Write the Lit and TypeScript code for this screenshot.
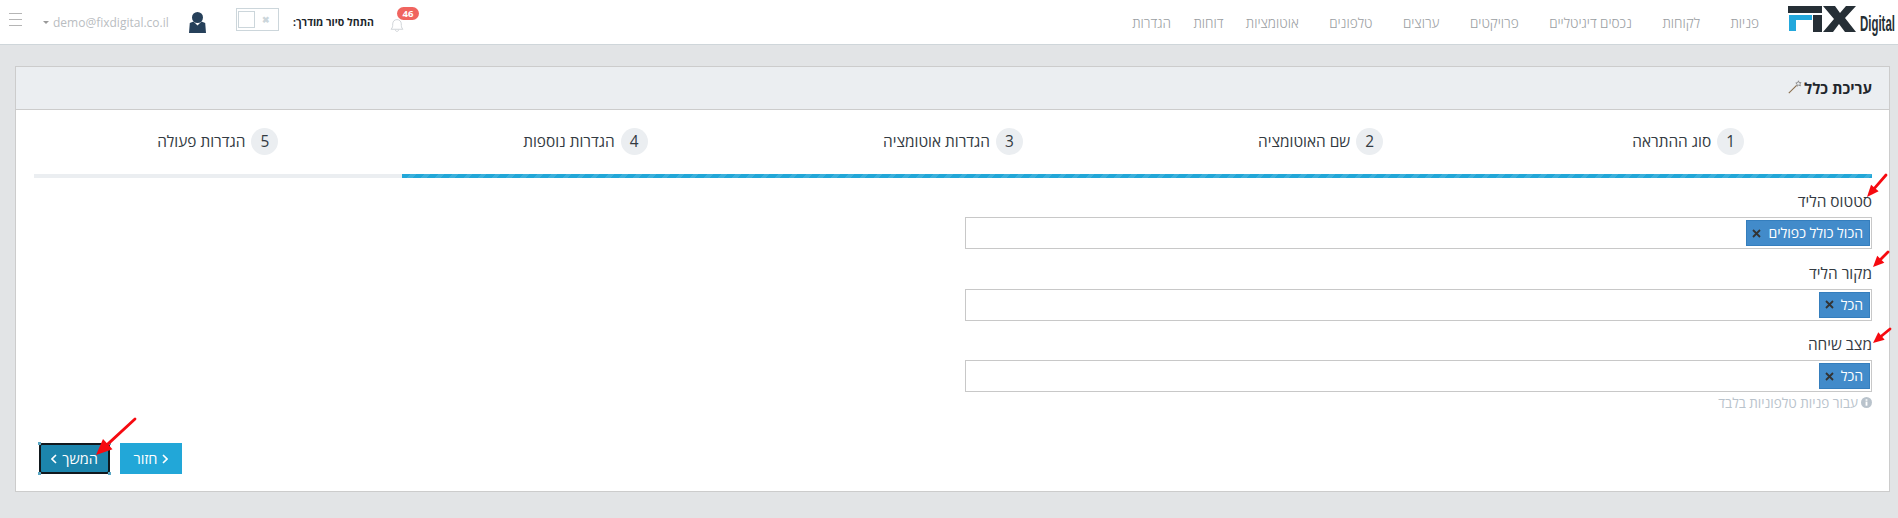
import { LitElement, html, css, svg } from "lit";
import { customElement } from "lit/decorators.js";

const NAV = ["פניות", "לקוחות", "נכסים דיגיטליים", "פרויקטים", "ערוצים", "טלפונים", "אוטומציות", "דוחות", "הגדרות"];
const STEPS = [
  ["1", "סוג ההתראה"],
  ["2", "שם האוטומציה"],
  ["3", "הגדרות אוטומציה"],
  ["4", "הגדרות נוספות"],
  ["5", "הגדרות פעולה"],
];
const FIELDS = [
  ["סטטוס הליד", "הכול כולל כפולים"],
  ["מקור הליד", "הכל"],
  ["מצב שיחה", "הכל"],
];
const ARROWS = [
  [1886, 175, 1867, 197, 12, 5],
  [1888, 252, 1873, 267, 11, 5],
  [1890, 329, 1873, 343, 11, 5],
  [135, 419, 96, 455, 16, 7],
];

@customElement("app-root")
export class AppRoot extends LitElement {
  static styles = css`
    :host {
      display: block;
      position: relative;
      width: 1898px;
      height: 518px;
      overflow: hidden;
      background: #e2e4e6;
      font-family: "Open Sans", "Noto Sans", "Liberation Sans", sans-serif;
      color: #333a42;
    }
    .top {
      height: 44px;
      box-sizing: content-box;
      background: #fff;
      border-bottom: 1px solid #cfd6da;
      display: flex;
      align-items: center;
      justify-content: space-between;
      direction: ltr;
    }
    .left {
      display: flex;
      align-items: center;
      height: 44px;
      padding-left: 9px;
    }
    .burger {
      width: 13px;
      display: flex;
      flex-direction: column;
      gap: 5px;
      margin-right: 21px;
      margin-top: -6px;
    }
    .burger i {
      display: block;
      height: 1px;
      background: #b5b5b5;
    }
    .caret {
      width: 0;
      height: 0;
      border: 3px solid transparent;
      border-top: 3px solid #999;
      border-bottom: 0;
      margin-right: 4px;
    }
    .email {
      font-size: 12px;
      color: #b9bdc1;
      width: 136px;
    }
    .avatar {
      width: 17px;
      height: 21px;
      margin-right: 30px;
    }
    .toggle {
      width: 39px;
      height: 19px;
      border: 1px solid #ccd6db;
      display: flex;
      align-items: center;
      padding: 1px;
      margin-right: 14px;
      box-sizing: content-box;
      margin-top: -5px;
    }
    .toggle .knob {
      width: 17px;
      height: 17px;
      border: 1px solid #ccd6db;
      box-sizing: border-box;
      flex: none;
    }
    .toggle .x {
      flex: 1;
      text-align: center;
      font-size: 9px;
      font-weight: 700;
      color: #ccd6db;
      line-height: 17px;
    }
    .tour {
      font-size: 10.5px;
      font-weight: 700;
      color: #20262c;
      width: 97px;
      direction: rtl;
      text-align: left;
    }
    .bellwrap {
      position: relative;
      width: 14px;
      height: 15px;
      margin-top: 7px;
    }
    .bellwrap svg {
      display: block;
    }
    .badge {
      position: absolute;
      left: 7px;
      top: -11px;
      width: 22px;
      height: 13px;
      border-radius: 7px;
      background: #f0645f;
      color: #fff;
      font-size: 9.5px;
      font-weight: 700;
      line-height: 13px;
      text-align: center;
    }
    .right {
      display: flex;
      direction: rtl;
      align-items: center;
      height: 44px;
    }
    .logo {
      display: flex;
      direction: ltr;
      align-items: flex-start;
      margin-left: 0;
      height: 44px;
      padding-top: 6px;
      box-sizing: border-box;
      width: 110px;
    }
    .logo svg {
      display: block;
      width: 69px;
      height: 26px;
      flex: none;
    }
    .logo span {
      font-family: "Liberation Sans", sans-serif;
      font-weight: 700;
      font-size: 22px;
      line-height: 22px;
      color: #262f36;
      transform: scaleX(0.52);
      transform-origin: left top;
      margin-left: 3px;
      margin-top: 7px;
      flex: none;
    }
    nav {
      display: flex;
      font-size: 13.6px;
      font-weight: 300;
      color: #9a9ea2;
    }
    nav span {
      margin-left: 30.5px;
    }
    nav span:nth-child(n + 7) {
      margin-left: 22.5px;
    }
    nav span:first-child {
      margin-right: 29px;
    }
    .card {
      margin: 21px 8px 0 15px;
      height: 424px;
      background: #fff;
      border: 1px solid #ccc;
      direction: rtl;
      display: flex;
      flex-direction: column;
    }
    .head {
      height: 42px;
      flex: none;
      background: #ebeef1;
      border-bottom: 1px solid #ccc;
      display: flex;
      align-items: center;
      gap: 2px;
      padding: 0 17px;
      font-size: 15px;
      font-weight: 700;
      color: #1f262c;
    }
    .head svg {
      width: 14px;
      height: 14px;
      margin-top: -3px;
    }
    .body {
      padding: 0 17px 0 18px;
      flex: 1;
      display: flex;
      flex-direction: column;
    }
    .steps {
      display: flex;
      height: 64px;
    }
    .step {
      flex: 1;
      display: flex;
      align-items: flex-start;
      justify-content: center;
      gap: 6px;
      padding-top: 18px;
      font-size: 15.4px;
      color: #333a42;
      line-height: 27px;
    }
    .num {
      width: 27px;
      height: 27px;
      border-radius: 50%;
      background: #ebeef1;
      text-align: center;
      flex: none;
    }
    .bar {
      height: 4px;
      flex: none;
      background: #ebeef1;
      display: flex;
    }
    .bar .fill {
      width: 80%;
      background: repeating-linear-gradient(135deg, #22a7d8 0 6px, #3bb0dc 6px 10px);
    }
    .form {
      width: 907px;
      margin-top: 14px;
      display: flex;
      flex-direction: column;
    }
    .label {
      font-size: 15.4px;
      line-height: 19px;
      margin-bottom: 6px;
      color: #333a42;
    }
    .select {
      height: 32px;
      box-sizing: border-box;
      border: 1px solid #c8c8c8;
      padding: 2px 1px 2px 2px;
      display: flex;
      margin-bottom: 14.5px;
    }
    .tag {
      background: #428bca;
      border: 1px solid #357ebd;
      color: #fff;
      font-size: 14px;
      line-height: 24px;
      padding: 0 6px 0 5px;
      display: flex;
      align-items: center;
      gap: 7px;
      box-sizing: border-box;
      height: 26px;
    }
    .tag svg {
      width: 9px;
      height: 9px;
      flex: none;
    }
    .help {
      margin-top: -13px;
      font-size: 13.5px;
      line-height: 18px;
      color: #b9c3cc;
      display: flex;
      align-items: center;
      gap: 3px;
    }
    .help svg {
      width: 11px;
      height: 11px;
    }
    .buttons {
      margin-top: 31.5px;
      margin-right: auto;
      display: flex;
      gap: 10px;
      flex-direction: row;
      margin-left: 5px;
      direction: ltr;
    }
    .btn {
      position: relative;
      height: 31px;
      box-sizing: border-box;
      color: #fff;
      font-size: 14.5px;
      font-weight: 500;
      display: flex;
      align-items: center;
      justify-content: center;
      direction: rtl;
      gap: 5px;
    }
    .btn svg {
      width: 6px;
      height: 10px;
      flex: none;
    }
    .next {
      width: 71px;
      background: #1c85ad;
      border: 2px solid #11181d;
      border-radius: 3px;
    }
    .back {
      width: 62px;
      background: #22a7d8;
    }
    .h {
      position: absolute;
      width: 3px;
      height: 3px;
      background: #5aa7c4;
    }
    .h.a { left: -3px; top: -3px; }
    .h.b { right: -3px; top: -3px; }
    .h.c { left: -3px; bottom: -3px; }
    .h.d { right: -3px; bottom: -3px; }
    .overlay {
      position: absolute;
      inset: 0;
      width: 1898px;
      height: 518px;
      pointer-events: none;
    }
  `;

  render() {
    return html`
      <div class="top">
        <div class="left">
          <div class="burger"><i></i><i></i><i></i></div>
          <div class="caret"></div>
          <div class="email">demo@fixdigital.co.il</div>
          <svg class="avatar" viewBox="0 0 17 21">
            <circle cx="8.5" cy="5.5" r="5.5" fill="#26405a"></circle>
            <path d="M0 21 L0.8 11 L4.5 9.5 L8.5 13.5 L12.5 9.5 L16.2 11 L17 21 Z" fill="#26405a"></path>
          </svg>
          <div class="toggle"><div class="knob"></div><div class="x">✖</div></div>
          <div class="tour">התחל סיור מודרך:</div>
          <div class="bellwrap">
            <svg viewBox="0 0 13 14" width="14" height="15" fill="none" stroke="#c9ced2" stroke-width="0.8">
              <path d="M1 10.5 C2.5 9 2.5 7.5 2.5 5.5 C2.5 3 4.3 1.5 6.5 1.5 C8.7 1.5 10.5 3 10.5 5.5 C10.5 7.5 10.5 9 12 10.5 Z"></path>
              <path d="M5 11 C5 13 8 13 8 11"></path>
            </svg>
            <div class="badge">46</div>
          </div>
        </div>
        <div class="right">
          <div class="logo">
            <svg viewBox="0 0 69 26">
              <rect x="0" y="0" width="34" height="7" fill="#262f36"></rect>
              <polygon points="1,9 24,9 24,14 8,14 8,25 1,25" fill="#23a8dc"></polygon>
              <rect x="25" y="9" width="9" height="17" fill="#262f36"></rect>
              <polygon points="35,0 47,0 52,7 58,0 68,0 57,12 68,26 57,26 51,18 45,26 35,26 46,13" fill="#262f36"></polygon>
            </svg>
            <span>Digital</span>
          </div>
          <nav>${NAV.map((n) => html`<span>${n}</span>`)}</nav>
        </div>
      </div>
      <div class="card">
        <div class="head">
          <span>עריכת כלל</span>
          <svg viewBox="0 0 14 14" fill="none">
            <path d="M0.8 13.2 L8.6 5.4" stroke="#8b6f4e" stroke-width="1.1"></path>
            <path d="M10.5 0.8 L11 2.6 L13 2.6 L11.8 4 L12.5 5.8 L10.6 5.2 L9 6.2 L9.1 4.2 L7.8 3 L9.7 2.6 Z" stroke="#7d7d7d" stroke-width="0.8"></path>
          </svg>
        </div>
        <div class="body">
          <div class="steps">
            ${STEPS.map(([n, t]) => html`<div class="step"><span class="num">${n}</span><span>${t}</span></div>`)}
          </div>
          <div class="bar"><div class="fill"></div></div>
          <div class="form">
            ${FIELDS.map(
              ([l, t]) => html`
                <div class="label">${l}</div>
                <div class="select">
                  <div class="tag">
                    <span>${t}</span>
                    <svg viewBox="0 0 9 9"><path d="M1 1 L8 8 M8 1 L1 8" stroke="#333" stroke-width="1.8"></path></svg>
                  </div>
                </div>
              `
            )}
            <div class="help">
              <svg viewBox="0 0 12 12">
                <circle cx="6" cy="6" r="6" fill="#b9c3cc"></circle>
                <rect x="5" y="5" width="2" height="4.5" fill="#fff"></rect>
                <rect x="5" y="2.5" width="2" height="1.6" fill="#fff"></rect>
              </svg>
              <span>עבור פניות טלפוניות בלבד</span>
            </div>
          </div>
          <div class="buttons">
            <div class="btn next">
              <i class="h a"></i><i class="h b"></i><i class="h c"></i><i class="h d"></i>
              <span>המשך</span>
              <svg viewBox="0 0 6 10"><path d="M5 1 L1 5 L5 9" fill="none" stroke="#fff" stroke-width="1.6"></path></svg>
            </div>
            <div class="btn back">
              <svg viewBox="0 0 6 10"><path d="M1 1 L5 5 L1 9" fill="none" stroke="#fff" stroke-width="1.6"></path></svg>
              <span>חזור</span>
            </div>
          </div>
        </div>
      </div>
      <svg class="overlay" viewBox="0 0 1898 518">
        ${ARROWS.map(([x1, y1, x2, y2, L, W]) => {
          const a = Math.atan2(y2 - y1, x2 - x1);
          const bx = x2 - L * Math.cos(a), by = y2 - L * Math.sin(a);
          const nx = -Math.sin(a) * W, ny = Math.cos(a) * W;
          return svg`<line x1=${x1} y1=${y1} x2=${bx} y2=${by} stroke="#f60a10" stroke-width="2.8" stroke-linecap="round"></line>
            <polygon points="${x2},${y2} ${bx + nx},${by + ny} ${bx - nx},${by - ny}" fill="#f60a10"></polygon>`;
        })}
      </svg>
    `;
  }
}
